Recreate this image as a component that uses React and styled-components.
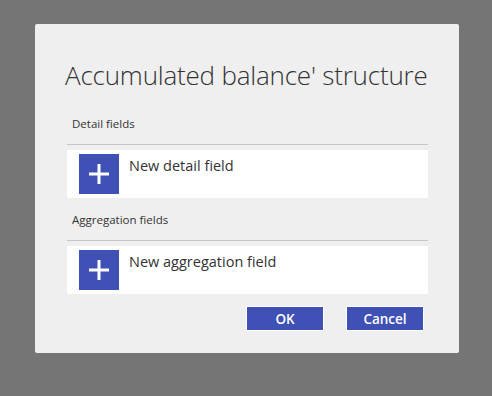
import React from 'react';
import styled, { createGlobalStyle } from 'styled-components';

const GlobalStyle = createGlobalStyle`
	html, body {
		margin: 0;
		padding: 0;
		background: #757575;
		font-family: 'Open Sans', 'Noto Sans', sans-serif;
	}
`;

const Page = styled.div`
	width: 492px;
	height: 396px;
	padding: 24px 0 0 35px;
	box-sizing: border-box;
`;

const Dialog = styled.div`
	width: 424px;
	height: 329px;
	background: #efefef;
	border-radius: 2px;
	box-sizing: border-box;
	padding: 33px 31px 0 32px;
	display: flex;
	flex-direction: column;
`;

const Title = styled.h1`
	margin: 0 0 0 -2px;
	font-weight: 300;
	font-size: 26px;
	line-height: 36px;
	color: #333;
	letter-spacing: -0.2px;
	white-space: nowrap;
`;

const Section = styled.div`
	display: flex;
	flex-direction: column;
	margin-top: ${props => props.top}px;
`;

const SectionLabel = styled.div`
	font-size: 11.5px;
	line-height: 16px;
	color: #333;
	padding-left: 5px;
	padding-bottom: 12px;
	border-bottom: 1px solid #c6c6c6;
`;

const AddRow = styled.div`
	margin-top: 5px;
	background: #fff;
	height: 48px;
	display: flex;
	align-items: flex-start;
	padding: 4px 12px;
	box-sizing: border-box;
	gap: 10px;
	cursor: pointer;
`;

const PlusBox = styled.div`
	width: 40px;
	height: 40px;
	background: #3f51b5;
	display: flex;
	align-items: center;
	justify-content: center;
	flex-shrink: 0;
`;

const RowText = styled.span`
	font-size: 14.5px;
	line-height: 20px;
	color: #333;
	margin-top: 2px;
`;

const Buttons = styled.div`
	display: flex;
	justify-content: flex-end;
	gap: 22px;
	margin-top: 12px;
	padding-right: 4px;
`;

const Button = styled.button`
	width: 78px;
	height: 25px;
	background: #3f51b5;
	border: 1px solid #fff;
	color: #fff;
	font-family: 'Open Sans', 'Noto Sans', sans-serif;
	font-weight: 600;
	font-size: 13.5px;
	padding: 0;
	cursor: pointer;
`;

const Plus = () => (
	<svg width="22" height="22" viewBox="0 0 22 22">
		<rect x="9.5" y="1" width="3" height="20" fill="#fff" />
		<rect x="1" y="9.5" width="20" height="3" fill="#fff" />
	</svg>
);

const AddField = ({ label, text, top }) => (
	<Section top={top}>
		<SectionLabel>{label}</SectionLabel>
		<AddRow>
			<PlusBox>
				<Plus />
			</PlusBox>
			<RowText>{text}</RowText>
		</AddRow>
	</Section>
);

const App = () => (
	<Page>
		<GlobalStyle />
		<Dialog>
			<Title>Accumulated balance' structure</Title>
			<AddField label='Detail fields' text='New detail field' top={23} />
			<AddField label='Aggregation fields' text='New aggregation field' top={14} />
			<Buttons>
				<Button>OK</Button>
				<Button>Cancel</Button>
			</Buttons>
		</Dialog>
	</Page>
);

export default App;
